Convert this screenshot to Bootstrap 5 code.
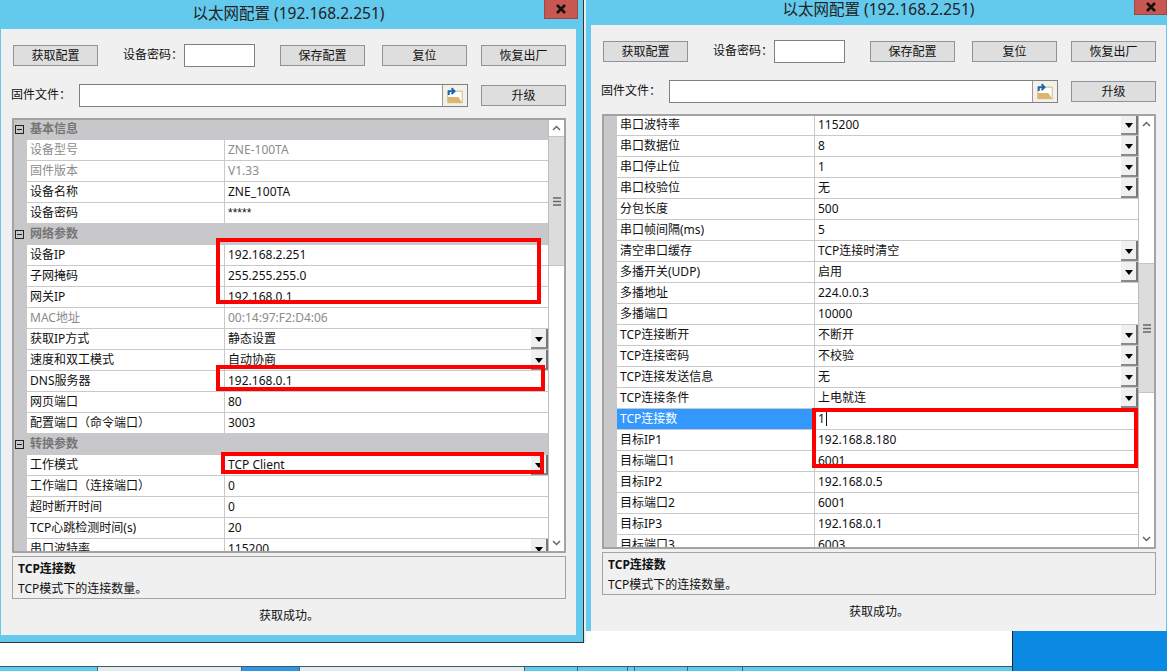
<!DOCTYPE html>
<html lang="zh">
<head>
<meta charset="utf-8">
<title>以太网配置</title>
<link rel="stylesheet" href="https://cdn.jsdelivr.net/npm/bootstrap@5.3.0/dist/css/bootstrap.min.css">
<style>
html,body{margin:0;height:100%;overflow:hidden;background:#fff}
body{font:12px/1.2 "Noto Sans","Noto Sans CJK SC",sans-serif;color:#111;text-spacing-trim:space-all}
.desk{position:relative;width:1167px;height:671px;overflow:hidden;background:#fff}
.gap-strip{position:absolute;left:584px;top:0;width:2px;height:643px;background:#ececec}
.desk-blue{position:absolute;left:1012px;top:631px;width:155px;height:40px;background:#0a8ae2;border-left:1px solid #222}
.task{position:absolute;left:0;top:666px;width:1012px;height:5px;background:#63c9ed;border-top:1px solid #3a5a66}
.task-seg{height:4px;border-right:1px solid #3a6a7c;flex:none}
.task-a{width:98px}.task-b{width:144px;background:#e6eaee}.task-c{width:58px;background:#2f98e0}.task-d{width:225px;background:#e6eaee}
.task-e{width:53px}.task-f{width:50px}.task-g{width:7px}.task-h{width:53px}.task-i{width:55px}
.win{position:absolute;top:0;background:#63c9ed}
.win-l{left:0;width:584px;height:643px;padding-left:1px;border-right:1px solid #333;border-bottom:1px solid #333}
.win-r{left:586px;width:581px;height:631px;padding-left:5px}
.tbar{width:575px;font-size:15.5px;line-height:18px;padding-bottom:7px;color:#222}
.win-l .tbar{height:29px}.win-r .tbar{height:25px}
.xbtn{position:absolute;top:0;background:#c75750;border:1px solid #9a4a46;border-top:0}
.win-l .xbtn{left:544px;width:34px;height:19px}
.win-r .xbtn{right:0;width:33px;height:15px}
.xbtn svg{display:block;width:10px;height:10px}
.panel{width:575px;height:606px;background:#f0f0f0;padding:15px 10px 0 11px}
.tools{height:23px}
.tools-top{margin-left:1px}
.tools-file{margin-top:17px}
.gbtn.btn{flex:none;width:85px;height:21px;padding:0;border:1.5px solid #8d9399;border-radius:0;background:#dedede;color:#111;font-size:12px;line-height:17px}
.lbl-pw{flex:none;width:53px;margin-left:25px}
.txt-in.form-control{min-height:0;border:1px solid #808080;border-radius:0;padding:0;background:#fff}
.pw-in.form-control{flex:none;width:71px;height:23px;margin-right:25px}
.spc-a{margin-right:17px}.spc-b{margin-right:14px}
.lbl-fw{flex:none;width:68px;margin-left:-1px}
.file-wrap{flex:none;width:389px;height:23px;border:1px solid #808080;background:#fff;margin-right:13px}
.file-ico{width:25px;height:21px;background:#f4f1ea;border-left:1px solid #999}
.file-ico svg{display:block;width:100%;height:100%}
.pgrid{width:554px;height:435px;margin-top:11px;border:2px solid #a3a3a3;background:#fff}
.pg-rows{width:534px;overflow:hidden}
.pg-inner{margin-top:-1px}
.pg-row{height:21px}
.pg-head{background:#c8c8ca;color:#757575;font-weight:700;padding-left:1px}
.pg-head span.tg{display:block;width:9px;height:9px;border:1px solid #222;position:relative;margin-right:6px}
.pg-head span.tg::after{content:"";position:absolute;left:1px;right:1px;top:3px;height:1px;background:#222}
.pg-gut{width:13px;background:#c8c8ca;flex:none}
.pg-key{width:198px;flex:none;padding-left:3px;border-right:1px solid #c9c9c9;border-bottom:1px solid #c9c9c9;height:21px;line-height:20px;white-space:nowrap;overflow:hidden}
.pg-val{width:323px;flex:none;padding-left:3px;border-bottom:1px solid #c9c9c9;height:21px;line-height:20px;white-space:nowrap}
.muted-cell{color:#8b8b8b}
.sel-cell{background:#3399ff;color:#fff}
.pw-mask{font-family:"Liberation Sans",sans-serif}
.caret-bar{display:inline-block;width:1px;height:14px;background:#111;vertical-align:-3px;margin-left:1px}
.combo{width:17px;height:20px;background:#f0f0f0;border-right:2px solid #777;border-bottom:2px solid #8a8a8a;padding-top:8px}
.combo i{display:block;width:0;height:0;border-left:4.5px solid transparent;border-right:4.5px solid transparent;border-top:5px solid #000}
.pg-scroll{width:16px;background:#fff;border-left:1px solid #bdbdbd}
.sc-btn{height:16px;background:#fff;flex:none}
.sc-btn svg{display:block;width:9px;height:6px}
.sc-thumb{height:130px;background:#dcdcdc;border-top:1px solid #c4c4c4;border-bottom:1px solid #c4c4c4;flex:none}
.sc-thumb svg{display:block;width:8px;height:9px}
.sc-gap{height:131px;flex:none}
.helpbox{width:554px;height:43px;margin-top:3px;border:1.5px solid #a3a3a3;padding:3px 5px 0}
.help-t{font-weight:700;height:20px;line-height:18px}
.help-d{line-height:18px}
.status-line{margin-top:8px;height:18px;line-height:18px;width:554px}
.redbox{position:absolute;border:4px solid #f00;pointer-events:none}
.rb-a{left:216px;top:238px;width:325px;height:66px}
.rb-b{left:216px;top:365px;width:329px;height:26px}
.rb-c{left:221px;top:452px;width:323px;height:22px}
.rb-d{left:812px;top:408px;width:326px;height:60px}
</style>
</head>
<body>
<div class="desk">
  <div class="gap-strip"></div>
  <div class="desk-blue"></div>
  <div class="task d-flex">
    <div class="task-seg task-a"></div><div class="task-seg task-b"></div><div class="task-seg task-c"></div><div class="task-seg task-d"></div><div class="task-seg task-e"></div><div class="task-seg task-f"></div><div class="task-seg task-g"></div><div class="task-seg task-h"></div><div class="task-seg task-i"></div>
  </div>

  <section class="win win-l">
    <div class="tbar d-flex align-items-end justify-content-center">以太网配置 (192.168.2.251)</div>
    <div class="xbtn d-flex align-items-center justify-content-center"><svg viewBox="0 0 10 10"><path d="M1 1l8 8M9 1l-8 8" stroke="#111" stroke-width="2.6" fill="none"/></svg></div>
    <div class="panel">
      <div class="tools tools-top d-flex align-items-center">
        <button class="btn gbtn" type="button">获取配置</button>
        <span class="lbl-pw text-nowrap">设备密码：</span>
        <input class="form-control txt-in pw-in ms-2" type="text" aria-label="设备密码">
        <button class="btn gbtn spc-a" type="button">保存配置</button>
        <button class="btn gbtn spc-b" type="button">复位</button>
        <button class="btn gbtn" type="button">恢复出厂</button>
      </div>
      <div class="tools tools-file d-flex align-items-center">
        <span class="lbl-fw">固件文件：</span>
        <div class="file-wrap d-flex justify-content-end">
          <div class="file-ico"><svg viewBox="0 0 25 21"><rect x="5" y="6" width="15" height="12" fill="#fff" stroke="#cdb68a" stroke-width="1"/><path d="M5 12h11l4 6H5z" fill="#dcb56f"/><path d="M6 10V6h5M9 3l3 3-3 3" fill="none" stroke="#1667b0" stroke-width="2"/></svg></div>
        </div>
        <button class="btn gbtn" type="button">升级</button>
      </div>
      <div class="pgrid d-flex">
        <div class="pg-rows"><div class="pg-inner">
          <div class="pg-row pg-head d-flex align-items-center"><span class="tg"></span>基本信息</div>
          <div class="pg-row d-flex"><div class="pg-gut"></div><div class="pg-key muted-cell">设备型号</div><div class="pg-val muted-cell">ZNE-100TA</div></div>
          <div class="pg-row d-flex"><div class="pg-gut"></div><div class="pg-key muted-cell">固件版本</div><div class="pg-val muted-cell">V1.33</div></div>
          <div class="pg-row d-flex"><div class="pg-gut"></div><div class="pg-key">设备名称</div><div class="pg-val">ZNE_100TA</div></div>
          <div class="pg-row d-flex"><div class="pg-gut"></div><div class="pg-key">设备密码</div><div class="pg-val pw-mask">*****</div></div>
          <div class="pg-row pg-head d-flex align-items-center"><span class="tg"></span>网络参数</div>
          <div class="pg-row d-flex"><div class="pg-gut"></div><div class="pg-key">设备IP</div><div class="pg-val">192.168.2.251</div></div>
          <div class="pg-row d-flex"><div class="pg-gut"></div><div class="pg-key">子网掩码</div><div class="pg-val">255.255.255.0</div></div>
          <div class="pg-row d-flex"><div class="pg-gut"></div><div class="pg-key">网关IP</div><div class="pg-val">192.168.0.1</div></div>
          <div class="pg-row d-flex"><div class="pg-gut"></div><div class="pg-key muted-cell">MAC地址</div><div class="pg-val muted-cell">00:14:97:F2:D4:06</div></div>
          <div class="pg-row d-flex"><div class="pg-gut"></div><div class="pg-key">获取IP方式</div><div class="pg-val d-flex justify-content-between">静态设置<div class="combo d-flex justify-content-center"><i></i></div></div></div>
          <div class="pg-row d-flex"><div class="pg-gut"></div><div class="pg-key">速度和双工模式</div><div class="pg-val d-flex justify-content-between">自动协商<div class="combo d-flex justify-content-center"><i></i></div></div></div>
          <div class="pg-row d-flex"><div class="pg-gut"></div><div class="pg-key">DNS服务器</div><div class="pg-val">192.168.0.1</div></div>
          <div class="pg-row d-flex"><div class="pg-gut"></div><div class="pg-key">网页端口</div><div class="pg-val">80</div></div>
          <div class="pg-row d-flex"><div class="pg-gut"></div><div class="pg-key">配置端口（命令端口）</div><div class="pg-val">3003</div></div>
          <div class="pg-row pg-head d-flex align-items-center"><span class="tg"></span>转换参数</div>
          <div class="pg-row d-flex"><div class="pg-gut"></div><div class="pg-key">工作模式</div><div class="pg-val d-flex justify-content-between">TCP Client<div class="combo d-flex justify-content-center"><i></i></div></div></div>
          <div class="pg-row d-flex"><div class="pg-gut"></div><div class="pg-key">工作端口（连接端口）</div><div class="pg-val">0</div></div>
          <div class="pg-row d-flex"><div class="pg-gut"></div><div class="pg-key">超时断开时间</div><div class="pg-val">0</div></div>
          <div class="pg-row d-flex"><div class="pg-gut"></div><div class="pg-key">TCP心跳检测时间(s)</div><div class="pg-val">20</div></div>
          <div class="pg-row d-flex"><div class="pg-gut"></div><div class="pg-key">串口波特率</div><div class="pg-val d-flex justify-content-between">115200<div class="combo d-flex justify-content-center"><i></i></div></div></div>
        </div></div>
        <div class="pg-scroll d-flex flex-column">
          <div class="sc-btn d-flex align-items-center justify-content-center"><svg viewBox="0 0 9 6"><path d="M1 5l3.5-3.5L8 5" fill="none" stroke="#666" stroke-width="1.5"/></svg></div>
          <div class="sc-thumb d-flex align-items-center justify-content-center"><svg viewBox="0 0 8 9"><path d="M0 1h8M0 4.500h8M0 8h8" stroke="#666" stroke-width="1.500"/></svg></div>
          <div class="flex-grow-1"></div>
          <div class="sc-btn d-flex align-items-center justify-content-center"><svg viewBox="0 0 9 6"><path d="M1 1l3.500 3.500L8 1" fill="none" stroke="#666" stroke-width="1.500"/></svg></div>
        </div>
      </div>
      <div class="helpbox">
        <div class="help-t">TCP连接数</div>
        <div class="help-d">TCP模式下的连接数量。</div>
      </div>
      <div class="status-line text-center">获取成功。</div>
    </div>
  </section>

  <section class="win win-r">
    <div class="tbar d-flex align-items-end justify-content-center">以太网配置 (192.168.2.251)</div>
    <div class="xbtn d-flex align-items-center justify-content-center"><svg viewBox="0 0 10 10"><path d="M1 1l8 8M9 1l-8 8" stroke="#111" stroke-width="2.6" fill="none"/></svg></div>
    <div class="panel">
      <div class="tools tools-top d-flex align-items-center">
        <button class="btn gbtn" type="button">获取配置</button>
        <span class="lbl-pw text-nowrap">设备密码：</span>
        <input class="form-control txt-in pw-in ms-2" type="text" aria-label="设备密码">
        <button class="btn gbtn spc-a" type="button">保存配置</button>
        <button class="btn gbtn spc-b" type="button">复位</button>
        <button class="btn gbtn" type="button">恢复出厂</button>
      </div>
      <div class="tools tools-file d-flex align-items-center">
        <span class="lbl-fw">固件文件：</span>
        <div class="file-wrap d-flex justify-content-end">
          <div class="file-ico"><svg viewBox="0 0 25 21"><rect x="5" y="6" width="15" height="12" fill="#fff" stroke="#cdb68a" stroke-width="1"/><path d="M5 12h11l4 6H5z" fill="#dcb56f"/><path d="M6 10V6h5M9 3l3 3-3 3" fill="none" stroke="#1667b0" stroke-width="2"/></svg></div>
        </div>
        <button class="btn gbtn" type="button">升级</button>
      </div>
      <div class="pgrid d-flex">
        <div class="pg-rows"><div class="pg-inner">
          <div class="pg-row d-flex"><div class="pg-gut"></div><div class="pg-key">串口波特率</div><div class="pg-val d-flex justify-content-between">115200<div class="combo d-flex justify-content-center"><i></i></div></div></div>
          <div class="pg-row d-flex"><div class="pg-gut"></div><div class="pg-key">串口数据位</div><div class="pg-val d-flex justify-content-between">8<div class="combo d-flex justify-content-center"><i></i></div></div></div>
          <div class="pg-row d-flex"><div class="pg-gut"></div><div class="pg-key">串口停止位</div><div class="pg-val d-flex justify-content-between">1<div class="combo d-flex justify-content-center"><i></i></div></div></div>
          <div class="pg-row d-flex"><div class="pg-gut"></div><div class="pg-key">串口校验位</div><div class="pg-val d-flex justify-content-between">无<div class="combo d-flex justify-content-center"><i></i></div></div></div>
          <div class="pg-row d-flex"><div class="pg-gut"></div><div class="pg-key">分包长度</div><div class="pg-val">500</div></div>
          <div class="pg-row d-flex"><div class="pg-gut"></div><div class="pg-key">串口帧间隔(ms)</div><div class="pg-val">5</div></div>
          <div class="pg-row d-flex"><div class="pg-gut"></div><div class="pg-key">清空串口缓存</div><div class="pg-val d-flex justify-content-between">TCP连接时清空<div class="combo d-flex justify-content-center"><i></i></div></div></div>
          <div class="pg-row d-flex"><div class="pg-gut"></div><div class="pg-key">多播开关(UDP)</div><div class="pg-val d-flex justify-content-between">启用<div class="combo d-flex justify-content-center"><i></i></div></div></div>
          <div class="pg-row d-flex"><div class="pg-gut"></div><div class="pg-key">多播地址</div><div class="pg-val">224.0.0.3</div></div>
          <div class="pg-row d-flex"><div class="pg-gut"></div><div class="pg-key">多播端口</div><div class="pg-val">10000</div></div>
          <div class="pg-row d-flex"><div class="pg-gut"></div><div class="pg-key">TCP连接断开</div><div class="pg-val d-flex justify-content-between">不断开<div class="combo d-flex justify-content-center"><i></i></div></div></div>
          <div class="pg-row d-flex"><div class="pg-gut"></div><div class="pg-key">TCP连接密码</div><div class="pg-val d-flex justify-content-between">不校验<div class="combo d-flex justify-content-center"><i></i></div></div></div>
          <div class="pg-row d-flex"><div class="pg-gut"></div><div class="pg-key">TCP连接发送信息</div><div class="pg-val d-flex justify-content-between">无<div class="combo d-flex justify-content-center"><i></i></div></div></div>
          <div class="pg-row d-flex"><div class="pg-gut"></div><div class="pg-key">TCP连接条件</div><div class="pg-val d-flex justify-content-between">上电就连<div class="combo d-flex justify-content-center"><i></i></div></div></div>
          <div class="pg-row d-flex"><div class="pg-gut"></div><div class="pg-key sel-cell">TCP连接数</div><div class="pg-val">1<span class="caret-bar"></span></div></div>
          <div class="pg-row d-flex"><div class="pg-gut"></div><div class="pg-key">目标IP1</div><div class="pg-val">192.168.8.180</div></div>
          <div class="pg-row d-flex"><div class="pg-gut"></div><div class="pg-key">目标端口1</div><div class="pg-val">6001</div></div>
          <div class="pg-row d-flex"><div class="pg-gut"></div><div class="pg-key">目标IP2</div><div class="pg-val">192.168.0.5</div></div>
          <div class="pg-row d-flex"><div class="pg-gut"></div><div class="pg-key">目标端口2</div><div class="pg-val">6001</div></div>
          <div class="pg-row d-flex"><div class="pg-gut"></div><div class="pg-key">目标IP3</div><div class="pg-val">192.168.0.1</div></div>
          <div class="pg-row d-flex"><div class="pg-gut"></div><div class="pg-key">目标端口3</div><div class="pg-val">6003</div></div>
        </div></div>
        <div class="pg-scroll d-flex flex-column">
          <div class="sc-btn d-flex align-items-center justify-content-center"><svg viewBox="0 0 9 6"><path d="M1 5l3.500-3.500L8 5" fill="none" stroke="#666" stroke-width="1.500"/></svg></div>
          <div class="sc-gap"></div>
          <div class="sc-thumb d-flex align-items-center justify-content-center"><svg viewBox="0 0 8 9"><path d="M0 1h8M0 4.500h8M0 8h8" stroke="#666" stroke-width="1.500"/></svg></div>
          <div class="flex-grow-1"></div>
          <div class="sc-btn d-flex align-items-center justify-content-center"><svg viewBox="0 0 9 6"><path d="M1 1l3.500 3.500L8 1" fill="none" stroke="#666" stroke-width="1.500"/></svg></div>
        </div>
      </div>
      <div class="helpbox">
        <div class="help-t">TCP连接数</div>
        <div class="help-d">TCP模式下的连接数量。</div>
      </div>
      <div class="status-line text-center">获取成功。</div>
    </div>
  </section>

  <div class="redbox rb-a"></div>
  <div class="redbox rb-b"></div>
  <div class="redbox rb-c"></div>
  <div class="redbox rb-d"></div>
</div>
<script src="https://cdn.jsdelivr.net/npm/bootstrap@5.3.0/dist/js/bootstrap.bundle.min.js"></script>
</body>
</html>
